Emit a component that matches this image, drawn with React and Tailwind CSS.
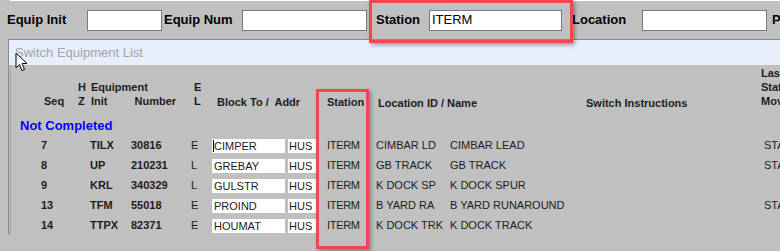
import React from 'react';

const rows = [
  { seq: '7', init: 'TILX', num: '30816', el: 'E', block: 'CIMPER', addr: 'HUS', station: 'ITERM', locId: 'CIMBAR LD', locName: 'CIMBAR LEAD', last: 'STA', cursor: true },
  { seq: '8', init: 'UP', num: '210231', el: 'L', block: 'GREBAY', addr: 'HUS', station: 'ITERM', locId: 'GB TRACK', locName: 'GB TRACK', last: 'STA' },
  { seq: '9', init: 'KRL', num: '340329', el: 'L', block: 'GULSTR', addr: 'HUS', station: 'ITERM', locId: 'K DOCK SP', locName: 'K DOCK SPUR', last: '' },
  { seq: '13', init: 'TFM', num: '55018', el: 'E', block: 'PROIND', addr: 'HUS', station: 'ITERM', locId: 'B YARD RA', locName: 'B YARD RUNAROUND', last: 'STA' },
  { seq: '14', init: 'TTPX', num: '82371', el: 'E', block: 'HOUMAT', addr: 'HUS', station: 'ITERM', locId: 'K DOCK TRK', locName: 'K DOCK TRACK', last: '' },
];

// Plain white box used as a search field
const Field = ({ width, value }) => (
  <div className={`${width} shrink-0 h-[21px] bg-white border border-[#7a7a7a] flex items-center pl-[2px] text-[13px] text-black`}>
    {value}
  </div>
);

const MouseCursor = () => (
  <svg className="absolute left-[15px] top-[52px]" width="13" height="20" viewBox="0 0 13 20">
    <path d="M1 1 L1 16 L4.5 12.5 L7 18.5 L9.5 17.5 L7 11.5 L12 11.5 Z" fill="white" stroke="black" strokeWidth="1" strokeLinejoin="round" />
  </svg>
);

export default function App() {
  return (
    <div className="relative w-[780px] h-[251px] overflow-hidden bg-[#c0c0c0] text-[#1c1c1c]" style={{ fontFamily: '"Liberation Sans", Arial, sans-serif' }}>
      <div className="h-px ml-[10px] bg-white" />

      {/* Search bar */}
      <div className="h-[38px] flex items-center pl-[7px] whitespace-nowrap">
        <span className="w-[80px] shrink-0 text-[13px] font-bold text-black">Equip Init</span>
        <Field width="w-[75px]" />
        <span className="ml-[2px] w-[78px] shrink-0 text-[13px] font-bold text-black">Equip Num</span>
        <Field width="w-[125px]" />
        <span className="ml-[9px] w-[53px] shrink-0 text-[13px] font-bold text-black">Station</span>
        <Field width="w-[133px]" value="ITERM" />
        <span className="ml-[10px] w-[70px] shrink-0 text-[13px] font-bold text-black">Location</span>
        <Field width="w-[125px]" />
        <span className="ml-[5px] shrink-0 text-[13px] font-bold text-black">P</span>
      </div>

      {/* Panel */}
      <div className="ml-[8px] border-t border-l border-[#8a8a8a]">
        <div className="h-[25px] bg-[#e8eefb] flex items-center pl-[6px] text-[13px] text-[#a3a3ab]">
          Switch Equipment List
        </div>

        <div className="relative border-l border-[#a8a8a8] ml-px text-[11px]">
          {/* Header */}
          <div className="flex items-end pt-px h-[43px] font-bold leading-[14px] whitespace-nowrap">
            <div className="ml-[33px] w-[34px] shrink-0">Seq</div>
            <div className="w-[13px] shrink-0 flex flex-col"><span>H</span><span>Z</span></div>
            <div className="w-[103px] shrink-0 flex flex-col">
              <span>Equipment</span>
              <span>Init<span className="ml-[27px]">Number</span></span>
            </div>
            <div className="w-[23px] shrink-0 flex flex-col"><span>E</span><span>L</span></div>
            <div className="w-[110px] shrink-0 mb-[-1px]">Block To /&nbsp; Addr</div>
            <div className="w-[51px] shrink-0 mb-[-1px]">Station</div>
            <div className="w-[208px] shrink-0 mb-[-2px]">Location ID / Name</div>
            <div className="w-[175px] shrink-0 mb-[-2px]">Switch Instructions</div>
            <div className="shrink-0 flex flex-col"><span>Last</span><span>Station</span><span>Move</span></div>
          </div>

          <div className="mt-[9px] h-[18px] flex items-center pl-[9px] text-[13px] font-bold text-[#0000ff]">
            Not Completed
          </div>

          {rows.map((r) => (
            <div key={r.seq} className="h-[20px] flex items-center whitespace-nowrap">
              <div className="ml-[30px] w-[49px] shrink-0 font-bold">{r.seq}</div>
              <div className="w-[41px] shrink-0 font-bold">{r.init}</div>
              <div className="w-[60px] shrink-0 font-bold">{r.num}</div>
              <div className="w-[21px] shrink-0">{r.el}</div>
              <div className="w-[76px] shrink-0">
                <div className="relative mt-[2px] w-[73px] h-[14px] bg-white flex items-center pl-[2px]">
                  {r.cursor && <span className="absolute left-px top-px w-px h-[12px] bg-black" />}
                  {r.block}
                </div>
              </div>
              <div className="w-[39px] shrink-0">
                <div className="mt-[2px] w-[31px] h-[14px] bg-white flex items-center pl-px">{r.addr}</div>
              </div>
              <div className="w-[49px] shrink-0 tracking-[-0.3px]">{r.station}</div>
              <div className="w-[74px] shrink-0">{r.locId}</div>
              <div className="w-[314px] shrink-0">{r.locName}</div>
              <div className="shrink-0">{r.last}</div>
            </div>
          ))}
        </div>
      </div>

      <MouseCursor />

      {/* Annotation boxes */}
      <div className="absolute left-[369px] top-0 w-[204px] h-[43px] border-[3px] border-[#f0484c] shadow-[2px_2px_4px_rgba(0,0,0,0.35)]" />
      <div className="absolute left-[316px] top-[89px] w-[53px] h-[160px] border-[3px] border-[#f0484c] shadow-[2px_2px_4px_rgba(0,0,0,0.35)]" />
    </div>
  );
}
